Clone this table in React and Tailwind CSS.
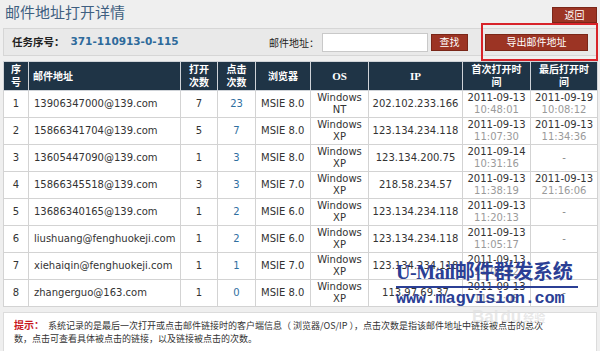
import React from "react";

const rows = [
  ["1", "13906347000@139.com", "7", "23", "MSIE 8.0", "NT", "202.102.233.166", ["2011-09-13", "10:48:01"], ["2011-09-19", "10:08:12"]],
  ["2", "15866341704@139.com", "5", "7", "MSIE 8.0", "XP", "123.134.234.118", ["2011-09-13", "11:07:30"], ["2011-09-13", "11:34:36"]],
  ["3", "13605447090@139.com", "1", "3", "MSIE 8.0", "XP", "123.134.200.75", ["2011-09-14", "10:31:16"], null],
  ["4", "15866345518@139.com", "3", "3", "MSIE 7.0", "XP", "218.58.234.57", ["2011-09-13", "11:38:19"], ["2011-09-13", "21:16:06"]],
  ["5", "13686340165@139.com", "1", "2", "MSIE 6.0", "XP", "123.134.234.118", ["2011-09-13", "11:20:13"], null],
  ["6", "liushuang@fenghuokeji.com", "1", "2", "MSIE 6.0", "XP", "123.134.234.118", ["2011-09-13", "11:05:17"], null],
  ["7", "xiehaiqin@fenghuokeji.com", "1", "1", "MSIE 7.0", "XP", "123.134.234.118", ["2011-09-13", "11:09:42"], null],
  ["8", "zhangerguo@163.com", "1", "0", "MSIE 8.0", "XP", "113.97.69.37", ["2011-09-13", "11:12:05"], null],
];

const th = "border border-[#cfd3d8] text-white font-bold text-[10px] leading-[13px] text-center align-middle";
const td = "border border-[#d3d3d3] text-[10px] leading-[12.5px] text-center align-middle h-[27px] p-0";

function Time({ v }) {
  if (!v) return <span className="text-[#888]">-</span>;
  return (
    <div>
      <div>{v[0]}</div>
      <div className="text-[#9a9a9a]">{v[1]}</div>
    </div>
  );
}

export default function App() {
  return (
    <div
      className="relative w-[600px] h-[351px] overflow-hidden bg-[#efefef] text-[#333]"
      style={{ fontFamily: '"DejaVu Sans", "Noto Sans CJK SC", sans-serif' }}
    >
      <div className="flex items-start justify-between h-[28px] px-[3px]">
        <div className="pl-[2px] pt-[2px] text-[15px] leading-[20px] text-[#3f5f80] font-['Noto_Sans_CJK_SC']">
          邮件地址打开详情
        </div>
        <button className="mt-[7px] w-[45px] h-[16px] bg-[#9c3424] border border-[#7a2618] text-white text-[10px] leading-[14px] font-['Noto_Sans_CJK_SC']">
          返回
        </button>
      </div>

      <div className="mx-[3px] h-[28px] bg-[#e9e9e9] border border-[#d6d6d6] flex items-center pl-[8px] pr-[8px]">
        <span className="text-[10.5px] font-bold text-[#222] font-['Noto_Sans_CJK_SC']">任务序号：</span>
        <span className="ml-[6px] text-[10.5px] font-bold text-[#2e6a9b]">371-110913-0-115</span>
        <span className="ml-auto text-[10px] text-[#222] font-['Noto_Sans_CJK_SC']">邮件地址：</span>
        <input className="ml-[3px] w-[106px] h-[19px] bg-white border border-[#c9c9c9] outline-none" />
        <button className="ml-[3px] w-[37px] h-[17px] bg-[#9c3424] border border-[#7a2618] text-white text-[10px] leading-[14px] font-['Noto_Sans_CJK_SC']">
          查找
        </button>
        <button className="ml-[17px] w-[103px] h-[17px] bg-[#9c3424] border border-[#7a2618] text-white text-[10px] leading-[14px] font-['Noto_Sans_CJK_SC']">
          导出邮件地址
        </button>
      </div>

      <div className="absolute left-[481px] top-[23px] w-[117px] h-[38px] border-2 border-[#d8232a]" />

      <div className="mx-[3px] mt-[5px]">
        <table className="w-[594px] table-fixed border-collapse bg-white">
          <colgroup>
            <col className="w-[25px]" />
            <col className="w-[152px]" />
            <col className="w-[37px]" />
            <col className="w-[38px]" />
            <col className="w-[55px]" />
            <col className="w-[58px]" />
            <col className="w-[94px]" />
            <col className="w-[68px]" />
            <col className="w-[67px]" />
          </colgroup>
          <thead>
            <tr className="bg-[#1f3446] h-[29px]">
              <th className={th}>序<br />号</th>
              <th className={th + " !text-left pl-[4px]"}>邮件地址</th>
              <th className={th}>打开<br />次数</th>
              <th className={th}>点击<br />次数</th>
              <th className={th}>浏览器</th>
              <th className={th + " font-['Liberation_Serif'] text-[11px]"}>OS</th>
              <th className={th + " font-['Liberation_Serif'] text-[11px]"}>IP</th>
              <th className={th}>首次打开时<br />间</th>
              <th className={th}>最后打开时<br />间</th>
            </tr>
          </thead>
          <tbody>
            {rows.map((r) => (
              <tr key={r[0]}>
                <td className={td}>{r[0]}</td>
                <td className={td + " !text-left pl-[5px] whitespace-nowrap"}>{r[1]}</td>
                <td className={td}>{r[2]}</td>
                <td className={td + " !text-[#2f6f9f]"}>{r[3]}</td>
                <td className={td + " !text-left pl-[5px]"}>{r[4]}</td>
                <td className={td}>
                  <div>Windows</div>
                  <div>{r[5]}</div>
                </td>
                <td className={td}>{r[6]}</td>
                <td className={td}><Time v={r[7]} /></td>
                <td className={td}><Time v={r[8]} /></td>
              </tr>
            ))}
          </tbody>
        </table>
      </div>

      <div className="mx-[3px] mt-[5px] h-[45px] bg-white border border-[#dcdcdc] pl-[10px] pt-[5px] text-[9px] leading-[13px] text-[#333] font-['Noto_Sans_CJK_SC']">
        <div>
          <span className="text-[#c8161d] font-bold text-[10px]">提示：</span>
          <span className="ml-[4px]">
            系统记录的是最后一次打开或点击邮件链接时的客户端信息（ 浏览器/OS/IP ），点击次数是指该邮件地址中链接被点击的总次
          </span>
        </div>
        <div>数，点击可查看具体被点击的链接，以及链接被点击的次数。</div>
      </div>

      <div className="absolute left-[396px] top-[259px] w-[182px] pointer-events-none text-[#2b3f95] whitespace-nowrap">
        <div className="text-[20px] leading-[26px] font-bold tracking-[-0.4px] font-['Liberation_Serif','Noto_Sans_CJK_SC']">
          U-Mail邮件群发系统
        </div>
        <div className="h-[2px] bg-[#2b3f95] mt-[1px]" />
        <div className="mt-[2px] text-[17px] leading-[18px] font-bold font-['Liberation_Mono'] tracking-[-0.3px]">
          www.magvision.com
        </div>
      </div>
      <div className="absolute left-[472px] top-[304px] text-[17px] font-bold text-[#e2e2e2]/80 font-['Liberation_Sans'] pointer-events-none">
        Bai<span className="ml-[2px]">du</span><span className="ml-[2px] text-[11px] font-['Noto_Sans_CJK_SC']">经验</span>
      </div>
    </div>
  );
}
